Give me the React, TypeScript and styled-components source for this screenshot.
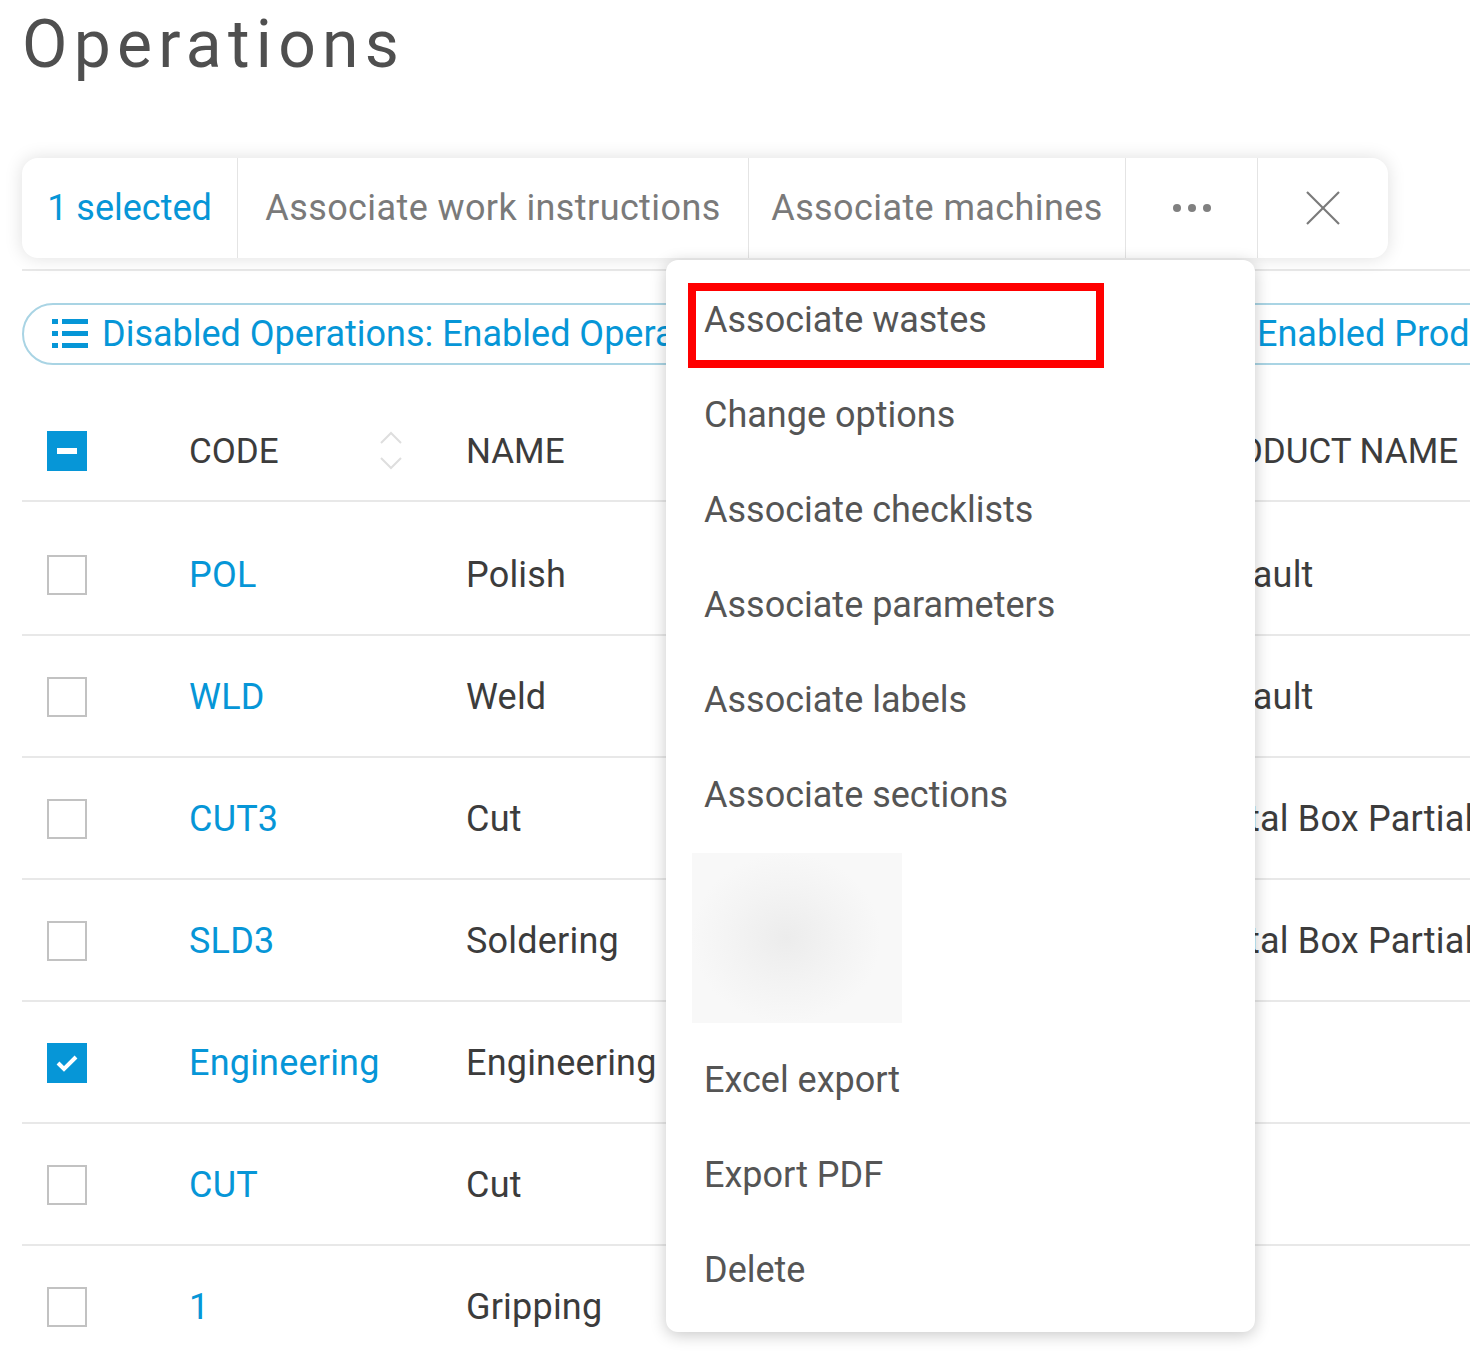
import React from "react";
import styled, { createGlobalStyle } from "styled-components";

const GlobalStyle = createGlobalStyle`
  html, body {
    margin: 0;
    padding: 0;
    background: #ffffff;
    overflow: hidden;
  }
  body {
    font-family: Roboto, "Noto Sans", "Liberation Sans", sans-serif;
    color: #3c3c3c;
  }
  * { box-sizing: border-box; }
`;

const BLUE = "#0696d7";

const Page = styled.div`
  position: relative;
  width: 1470px;
  height: 1357px;
  overflow: hidden;
  padding: 5px 0 0 22px;
`;

const Title = styled.h1`
  margin: 0;
  font-size: 66px;
  line-height: 80px;
  font-weight: 400;
  letter-spacing: 6.3px;
  color: #4f4f4f;
`;

const Toolbar = styled.div`
  margin-top: 73px;
  display: flex;
  width: max-content;
  height: 100px;
  background: #ffffff;
  border-radius: 16px;
  box-shadow: 0 0 18px rgba(0, 0, 0, 0.13);
  position: relative;
  z-index: 2;
`;

const Segment = styled.div<{ $w: number; $first?: boolean; $accent?: boolean }>`
  position: relative;
  width: ${(p) => p.$w}px;
  height: 100%;
  display: flex;
  align-items: center;
  justify-content: center;
  border-left: ${(p) => (p.$first ? "none" : "1px solid #e4e4e4")};
  font-size: 36px;
  letter-spacing: ${(p) => (p.$accent ? "0" : "0.4px")};
  white-space: nowrap;
  color: ${(p) => (p.$accent ? BLUE : "#7a7a7a")};
`;

const Rule = styled.div`
  margin-top: 11px;
  height: 2px;
  width: 1500px;
  background: #e8e8e8;
`;

const FilterPill = styled.div`
  margin-top: 32px;
  height: 62px;
  width: max-content;
  display: flex;
  align-items: center;
  gap: 14px;
  padding: 0 40px 0 28px;
  border: 2px solid #a9d4e4;
  border-radius: 31px;
  color: ${BLUE};
  font-size: 36px;
  white-space: nowrap;
`;

const FilterGroup = styled.span<{ $gap: number }>`
  margin-left: ${(p) => p.$gap}px;
`;

const Table = styled.div`
  margin-top: 35px;
  width: 1700px;
`;

const Row = styled.div<{ $header?: boolean }>`
  display: grid;
  grid-template-columns: 145px 277px 729px 549px;
  height: ${(p) => (p.$header ? 102 : 122)}px;
  border-bottom: 2px solid #e8e8e8;
  align-items: center;
  font-size: ${(p) => (p.$header ? 35 : 36)}px;
  color: #3c3c3c;
  letter-spacing: ${(p) => (p.$header ? "0" : "0.2px")};
`;

const Body = styled.div`
  padding-top: 12px;
`;

const CheckCell = styled.div`
  padding-left: 25px;
  padding-top: 2px;
  display: flex;
  align-items: center;
`;

const Cell = styled.div<{ $link?: boolean; $shift?: number }>`
  padding-left: ${(p) => 22 + (p.$shift ?? 0)}px;
  padding-top: 2px;
  white-space: nowrap;
  color: ${(p) => (p.$link ? BLUE : "#3c3c3c")};
`;

const HeaderCell = styled.div<{ $sortable?: boolean }>`
  padding-left: 22px;
  padding-right: ${(p) => (p.$sortable ? 42 : 0)}px;
  padding-top: 2px;
  display: flex;
  align-items: center;
  justify-content: space-between;
  white-space: nowrap;
`;

const Box = styled.div<{ $on?: boolean }>`
  width: 40px;
  height: 40px;
  border: ${(p) => (p.$on ? "none" : "2px solid #c2c2c2")};
  background: ${(p) => (p.$on ? BLUE : "#fff")};
  display: flex;
  align-items: center;
  justify-content: center;
`;

const Menu = styled.div`
  position: absolute;
  top: 102px;
  right: 2px;
  width: 589px;
  background: #fff;
  border-radius: 12px;
  box-shadow: 0 3px 16px rgba(0, 0, 0, 0.22);
  padding: 12px 0 15px;
  z-index: 5;
  cursor: default;
`;

const MenuItem = styled.div`
  position: relative;
  height: 95px;
  display: flex;
  align-items: center;
  padding-left: 38px;
  font-size: 36px;
  color: #555555;
  letter-spacing: 0;
`;

const Highlight = styled.div`
  position: absolute;
  top: 11px;
  left: 22px;
  width: 416px;
  height: 85px;
  border: 8px solid #ff0000;
`;

const BlurSlot = styled.div`
  height: 190px;
  padding: 11px 0 0 26px;
`;

const BlurBlock = styled.div`
  width: 210px;
  height: 170px;
  background: radial-gradient(ellipse 45% 50% at 45% 50%, #ececec 0%, #f3f3f3 55%, #f8f8f8 100%);
`;

const ListIcon = () => (
  <svg width="36" height="32" viewBox="0 0 36 32">
    {[0, 12, 24].map((y) => (
      <g key={y} fill={BLUE}>
        <rect x="0" y={y + 1} width="6" height="5" />
        <rect x="10" y={y + 1} width="26" height="5" />
      </g>
    ))}
  </svg>
);

const SortIcon = () => (
  <svg width="22" height="40" viewBox="0 0 22 40" fill="none" stroke="#dedede" strokeWidth="2">
    <polyline points="1,12 11,2 21,12" />
    <polyline points="1,27 11,37 21,27" />
  </svg>
);

const Dots = () => (
  <svg width="38" height="10" viewBox="0 0 38 10">
    <circle cx="4" cy="5" r="4" fill="#808080" />
    <circle cx="19" cy="5" r="4" fill="#808080" />
    <circle cx="34" cy="5" r="4" fill="#808080" />
  </svg>
);

const CloseIcon = () => (
  <svg width="34" height="34" viewBox="0 0 34 34" stroke="#7a7a7a" strokeWidth="2.2" fill="none">
    <line x1="1" y1="1" x2="33" y2="33" />
    <line x1="33" y1="1" x2="1" y2="33" />
  </svg>
);

const Minus = () => (
  <svg width="20" height="6" viewBox="0 0 20 6">
    <rect width="20" height="6" fill="#fff" />
  </svg>
);

const Check = () => (
  <svg width="22" height="18" viewBox="0 0 22 18" fill="none" stroke="#fff" strokeWidth="4">
    <polyline points="2,9 8,15 20,3" />
  </svg>
);

const rows = [
  { code: "POL", name: "Polish", product: "Default", checked: false },
  { code: "WLD", name: "Weld", product: "Default", checked: false },
  { code: "CUT3", name: "Cut", product: "Metal Box Partial Assembly", checked: false },
  { code: "SLD3", name: "Soldering", product: "Metal Box Partial Assembly", checked: false },
  { code: "Engineering", name: "Engineering", product: "", checked: true },
  { code: "CUT", name: "Cut", product: "", checked: false },
  { code: "1", name: "Gripping", product: "", checked: false },
];

const menuItems = [
  "Change options",
  "Associate checklists",
  "Associate parameters",
  "Associate labels",
  "Associate sections",
];

export default function App() {
  return (
    <>
      <GlobalStyle />
      <Page>
        <Title>Operations</Title>
        <Toolbar>
          <Segment $w={215} $first $accent>1 selected</Segment>
          <Segment $w={511}>Associate work instructions</Segment>
          <Segment $w={377}>Associate machines</Segment>
          <Segment $w={132}>
            <Dots />
            <Menu>
              <MenuItem>
                Associate wastes
                <Highlight />
              </MenuItem>
              {menuItems.map((m) => (
                <MenuItem key={m}>{m}</MenuItem>
              ))}
              <BlurSlot>
                <BlurBlock />
              </BlurSlot>
              <MenuItem>Excel export</MenuItem>
              <MenuItem>Export PDF</MenuItem>
              <MenuItem>Delete</MenuItem>
            </Menu>
          </Segment>
          <Segment $w={131}>
            <CloseIcon />
          </Segment>
        </Toolbar>
        <Rule />
        <FilterPill>
          <ListIcon />
          <span>
            Disabled Operations: Enabled Operations
            <FilterGroup $gap={193}>Disabled Products: Enabled Products</FilterGroup>
          </span>
        </FilterPill>
        <Table>
          <Row $header>
            <CheckCell>
              <Box $on>
                <Minus />
              </Box>
            </CheckCell>
            <HeaderCell $sortable>
              CODE
              <SortIcon />
            </HeaderCell>
            <HeaderCell>NAME</HeaderCell>
            <HeaderCell>PRODUCT NAME</HeaderCell>
          </Row>
          <Body>
            {rows.map((r, i) => (
              <Row key={i}>
                <CheckCell>
                  <Box $on={r.checked}>{r.checked && <Check />}</Box>
                </CheckCell>
                <Cell $link>{r.code}</Cell>
                <Cell>{r.name}</Cell>
                <Cell $shift={2}>{r.product}</Cell>
              </Row>
            ))}
          </Body>
        </Table>
      </Page>
    </>
  );
}
